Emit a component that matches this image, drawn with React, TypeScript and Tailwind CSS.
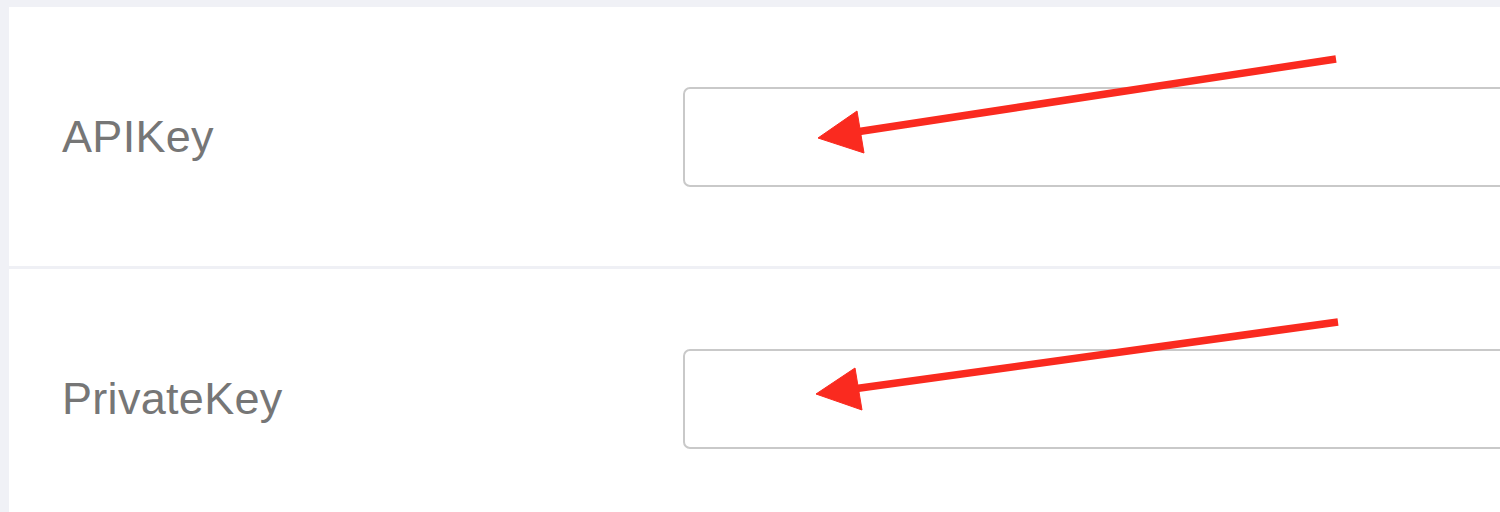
const rows = [{ label: "APIKey" }, { label: "PrivateKey" }];

// red annotation arrows drawn over the form
const arrows = [
  { tail: [1336, 59], base: [856, 132], tip: [818, 138], c1: [857, 111], c2: [864, 153] },
  { tail: [1338, 322], base: [853, 389], tip: [816, 394], c1: [855, 368], c2: [862, 410] },
];

function Arrows(): React.JSX.Element {
  return (
    <svg
      className="pointer-events-none absolute inset-0"
      width={1500}
      height={512}
      viewBox="0 0 1500 512"
    >
      {arrows.map((a, i) => (
        <g key={i} fill="#fa2a1f" stroke="#fa2a1f">
          <line
            x1={a.tail[0]}
            y1={a.tail[1]}
            x2={a.base[0]}
            y2={a.base[1]}
            strokeWidth={7.5}
          />
          <polygon
            points={`${a.tip[0]},${a.tip[1]} ${a.c1[0]},${a.c1[1]} ${a.c2[0]},${a.c2[1]}`}
            strokeWidth={1}
          />
        </g>
      ))}
    </svg>
  );
}

export default function App(): React.JSX.Element {
  return (
    <div
      className="relative h-[512px] w-[1500px] overflow-hidden bg-[#f0f1f6] pl-[9px] pt-[7px]"
      style={{ fontFamily: '"Liberation Sans", Arial, sans-serif' }}
    >
      <div className="h-full bg-white">
        {rows.map((row) => (
          <div
            key={row.label}
            className="flex h-[262px] items-center border-b-[3px] border-[#eff0f5]"
          >
            <div className="w-[674px] shrink-0 pl-[53px] text-[45px] tracking-[0.3px] text-[#767676]">
              {row.label}
            </div>
            <input
              type="text"
              className="h-[100px] w-[900px] shrink-0 rounded-[7px] border-2 border-[#c9c9c9] bg-white outline-none"
            />
          </div>
        ))}
      </div>
      <Arrows />
    </div>
  );
}
